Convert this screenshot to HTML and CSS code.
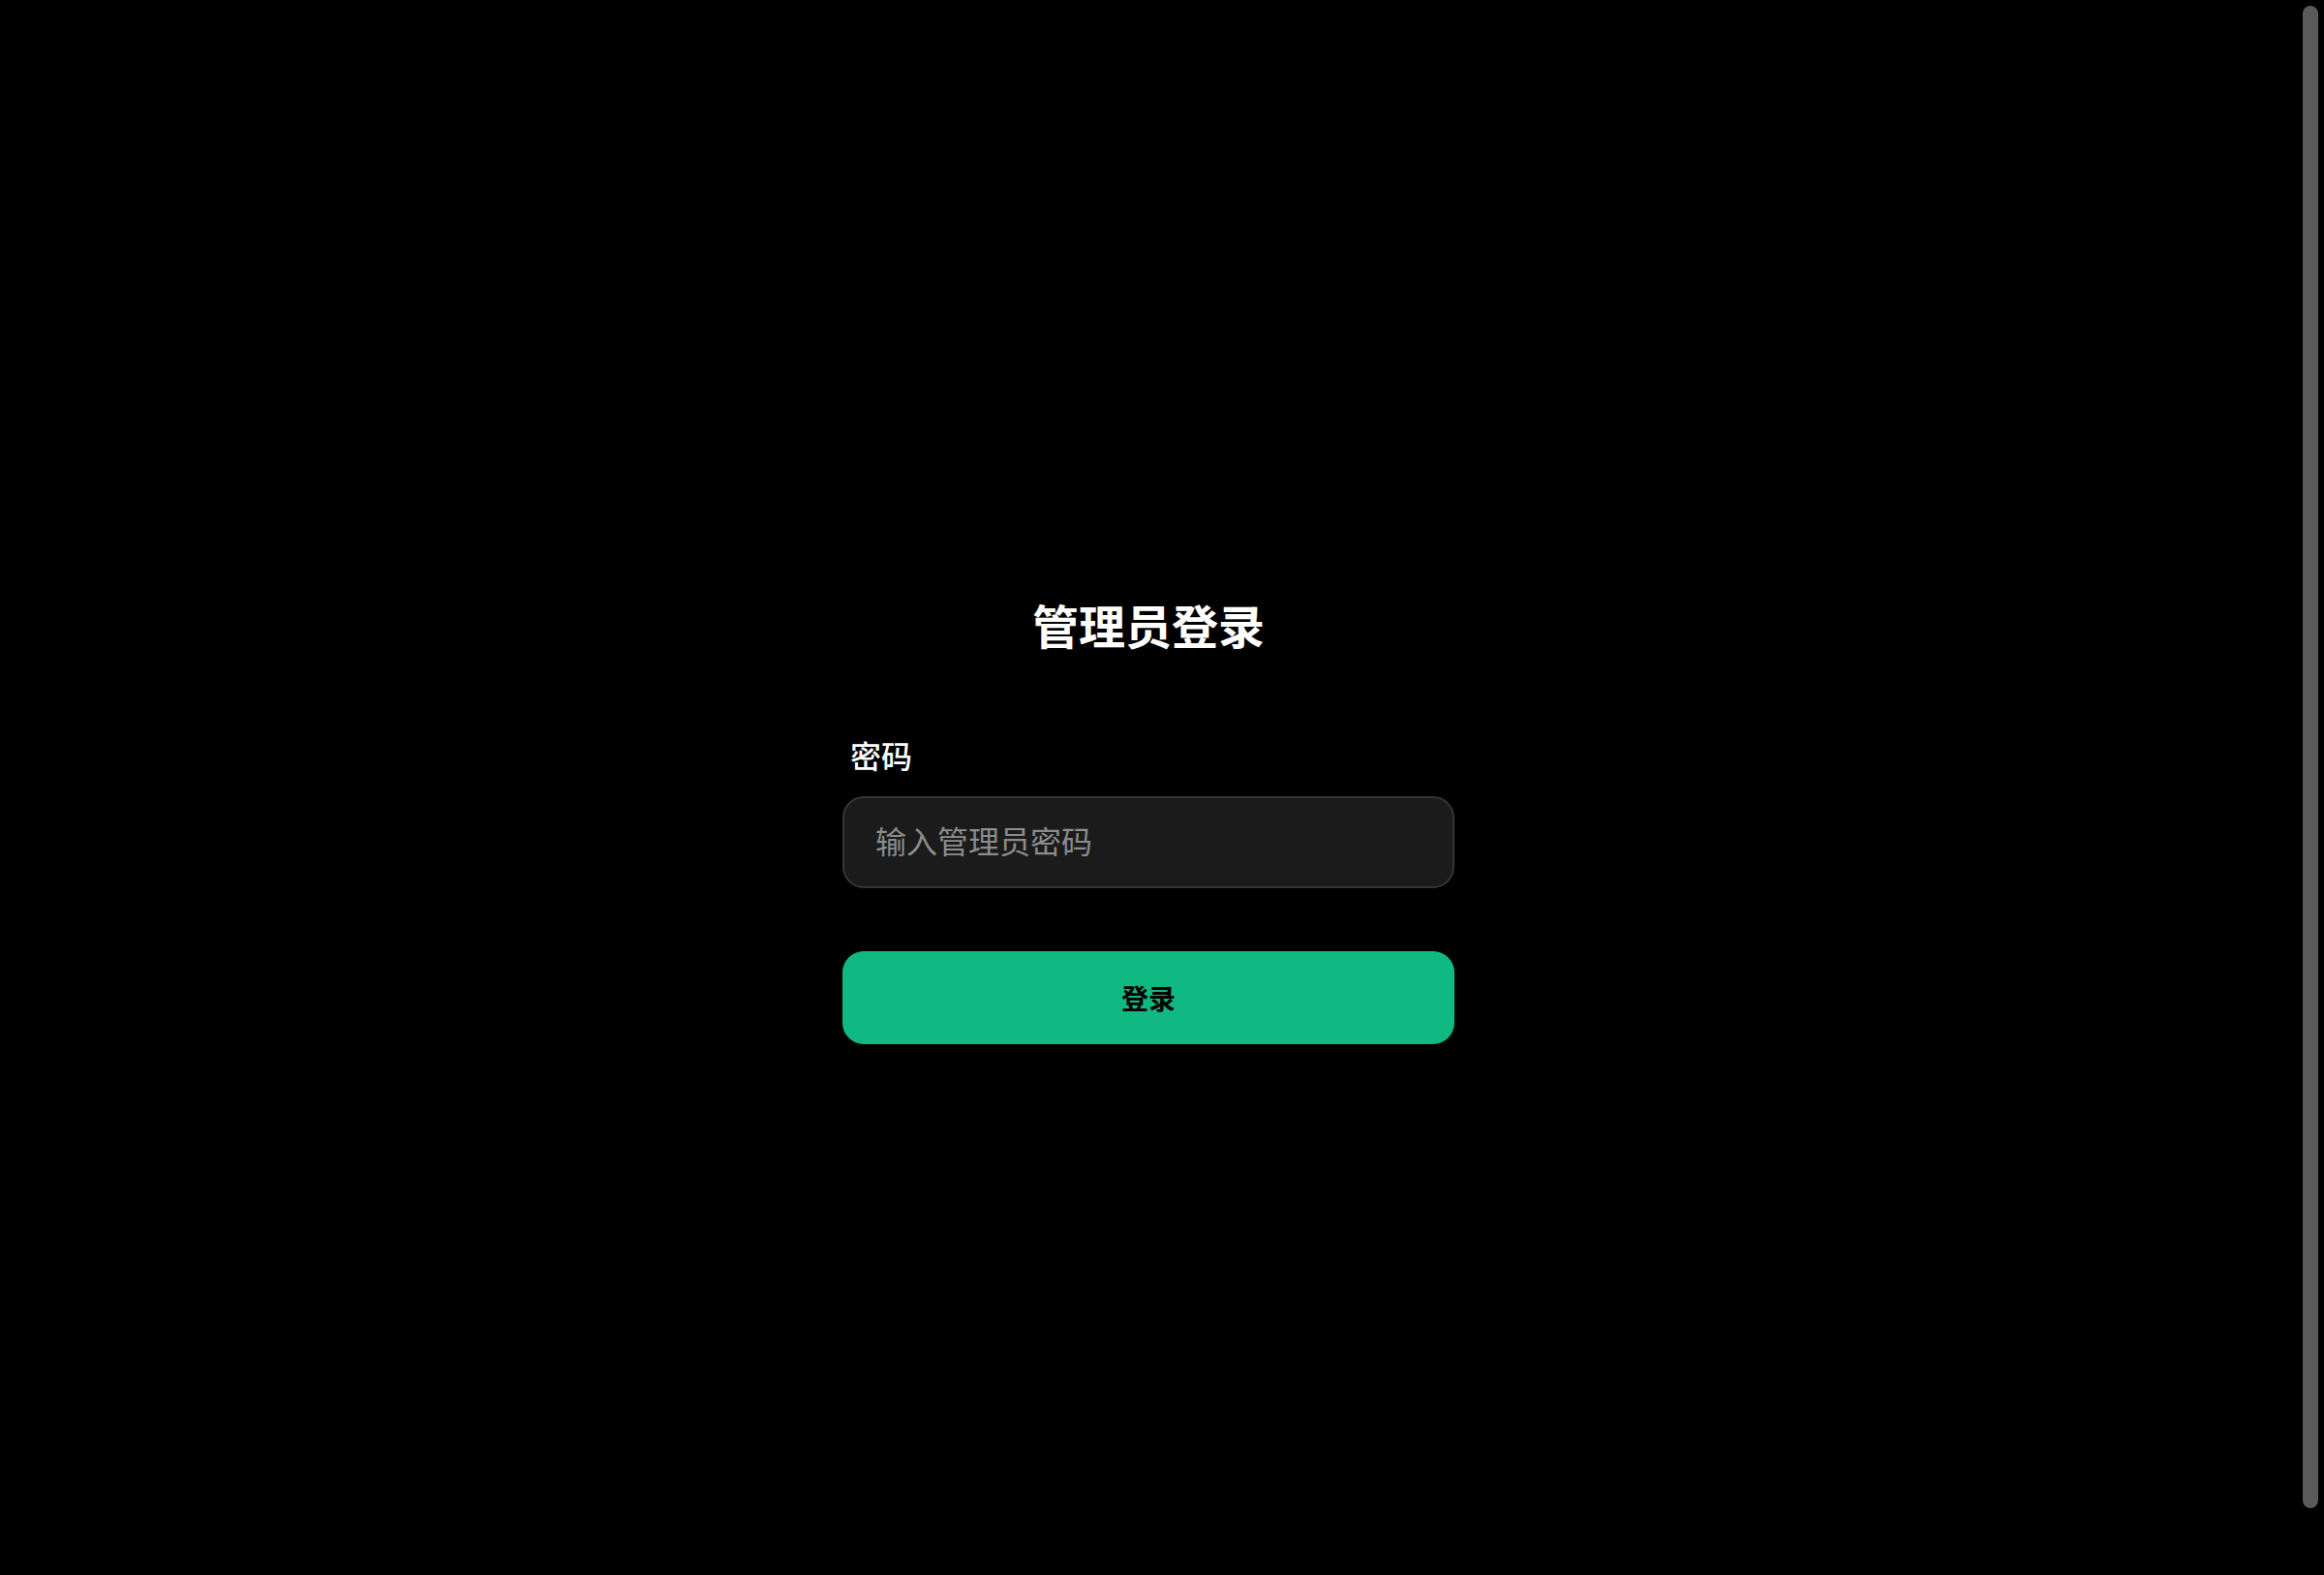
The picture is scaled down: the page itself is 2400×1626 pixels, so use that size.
FILE: index.html
```html
<!DOCTYPE html>
<html lang="zh-CN">
<head>
<meta charset="utf-8">
<title>管理员登录</title>
<link rel="stylesheet" href="styles.css">
</head>
<body>
<div class="page">
  <form class="login" onsubmit="return false;">
    <h1 class="login-title">管理员登录</h1>
    <label class="field-label" for="pwd">密码</label>
    <input class="field-input" id="pwd" type="password" placeholder="输入管理员密码">
    <button class="submit-btn" type="submit">登录</button>
  </form>
</div>
<div class="scrollbar" aria-hidden="true"><div class="scrollbar-thumb"></div></div>
</body>
</html>
```

FILE: styles.css
```css
html {
  background: #000;
}
body {
  margin: 0;
  background: #000;
  color: #fff;
  font-family: "Noto Sans CJK SC", "Noto Sans", sans-serif;
}
.page {
  min-height: 100vh;
  padding: 33px 28px 32px 0;
  display: flex;
  align-items: center;
  justify-content: center;
}
.login {
  width: 632px;
  display: flex;
  flex-direction: column;
}
.login-title {
  margin: 0 0 85px;
  font-size: 48px;
  line-height: 60px;
  font-weight: 700;
  text-align: center;
  color: #fff;
}
.field-label {
  padding-left: 8px;
  font-size: 32px;
  line-height: 40px;
  font-weight: 500;
  color: #fff;
  margin-bottom: 23px;
}
.field-input {
  box-sizing: border-box;
  height: 95px;
  width: 100%;
  margin: 0 0 65px;
  padding: 0 32px 5px;
  background: #1b1b1b;
  border: 2px solid #353535;
  border-radius: 22px;
  color: #fff;
  font-family: "Noto Sans CJK SC", "Noto Sans", sans-serif;
  font-size: 32px;
  outline: none;
}
.field-input::placeholder {
  color: #8c8c8c;
}
.submit-btn {
  height: 96px;
  width: 100%;
  border: none;
  border-radius: 22px;
  background: #10b981;
  color: #000;
  font-family: "Noto Sans CJK SC", "Noto Sans", sans-serif;
  font-size: 28px;
  font-weight: 700;
  cursor: pointer;
}
.scrollbar {
  position: fixed;
  top: 0;
  right: 0;
  bottom: 0;
  width: 28px;
  background: #000;
  padding: 6px;
  box-sizing: border-box;
}
.scrollbar-thumb {
  height: 1551px;
  background: #5a5a5a;
  border-radius: 8px;
}
```
